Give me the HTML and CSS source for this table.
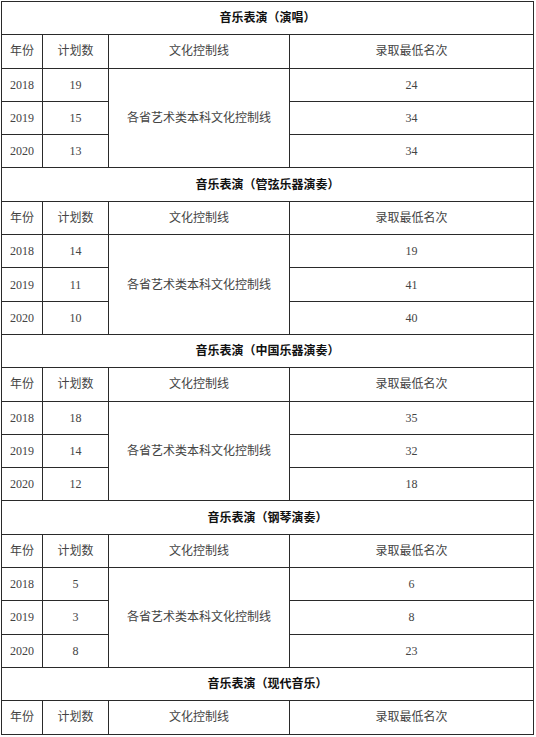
FILE: index.html
```html
<!DOCTYPE html>
<html lang="zh-CN">
<head>
<meta charset="utf-8">
<link rel="stylesheet" href="styles.css">
</head>
<body>
<table class="plan">
<colgroup>
<col class="c-year"><col class="c-plan"><col class="c-line"><col class="c-rank">
</colgroup>
<tbody>
<tr class="title"><td colspan="4">音乐表演（演唱）</td></tr>
<tr class="head"><td>年份</td><td>计划数</td><td>文化控制线</td><td>录取最低名次</td></tr>
<tr><td>2018</td><td>19</td><td rowspan="3">各省艺术类本科文化控制线</td><td>24</td></tr>
<tr><td>2019</td><td>15</td><td>34</td></tr>
<tr><td>2020</td><td>13</td><td>34</td></tr>

<tr class="title"><td colspan="4">音乐表演（管弦乐器演奏）</td></tr>
<tr class="head"><td>年份</td><td>计划数</td><td>文化控制线</td><td>录取最低名次</td></tr>
<tr><td>2018</td><td>14</td><td rowspan="3">各省艺术类本科文化控制线</td><td>19</td></tr>
<tr><td>2019</td><td>11</td><td>41</td></tr>
<tr><td>2020</td><td>10</td><td>40</td></tr>

<tr class="title"><td colspan="4">音乐表演（中国乐器演奏）</td></tr>
<tr class="head"><td>年份</td><td>计划数</td><td>文化控制线</td><td>录取最低名次</td></tr>
<tr><td>2018</td><td>18</td><td rowspan="3">各省艺术类本科文化控制线</td><td>35</td></tr>
<tr><td>2019</td><td>14</td><td>32</td></tr>
<tr><td>2020</td><td>12</td><td>18</td></tr>

<tr class="title"><td colspan="4">音乐表演（钢琴演奏）</td></tr>
<tr class="head"><td>年份</td><td>计划数</td><td>文化控制线</td><td>录取最低名次</td></tr>
<tr><td>2018</td><td>5</td><td rowspan="3">各省艺术类本科文化控制线</td><td>6</td></tr>
<tr><td>2019</td><td>3</td><td>8</td></tr>
<tr><td>2020</td><td>8</td><td>23</td></tr>

<tr class="title"><td colspan="4">音乐表演（现代音乐）</td></tr>
<tr class="head"><td>年份</td><td>计划数</td><td>文化控制线</td><td>录取最低名次</td></tr>
</tbody>
</table>
</body>
</html>
```
FILE: styles.css
```css
html, body {
  margin: 0;
  padding: 0;
  background: #ffffff;
}
body {
  padding: 1px 0 0 1px;
  height: 736px;
  overflow: hidden;
  font-family: "Liberation Serif", "Noto Sans CJK SC", serif;
  font-size: 12px;
  color: #444444;
}
.plan {
  border-collapse: collapse;
  table-layout: fixed;
  width: 532px;
}
.c-year { width: 41px; }
.c-plan { width: 66px; }
.c-line { width: 181px; }
.c-rank { width: 244px; }
.plan td {
  border: 1px solid #2a2a2a;
  height: 32.3px;
  padding: 0;
  text-align: center;
  vertical-align: middle;
  line-height: 14px;
}
.plan .title td {
  font-weight: bold;
  color: #111111;
  font-size: 12px;
}
```
